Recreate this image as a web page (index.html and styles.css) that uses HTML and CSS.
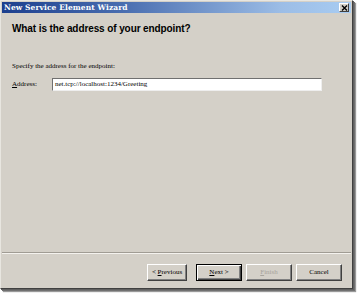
FILE: index.html
```html
<!DOCTYPE html>
<html>
<head>
<meta charset="utf-8">
<link rel="stylesheet" href="styles.css">
</head>
<body>
<div class="window">
  <div class="titlebar">
    <span class="title">New Service Element Wizard</span>
    <span class="close">
      <svg width="7" height="6" viewBox="0 0 7 6"><path d="M1 0.5 L6 5.5 M6 0.5 L1 5.5" stroke="#000" stroke-width="1.4"/></svg>
    </span>
  </div>
  <div class="header">
    <h1 class="heading">What is the address of your endpoint?</h1>
  </div>
  <div class="content">
    <p class="prompt">Specify the address for the endpoint:</p>
    <div class="field">
      <label class="label"><u>A</u>ddress:</label>
      <div class="input">net.tcp://localhost:1234/Greeting</div>
    </div>
  </div>
  <div class="separator"></div>
  <div class="buttons">
    <div class="btn">&lt; <u>P</u>revious</div>
    <div class="btn default"><u>N</u>ext &gt;</div>
    <div class="btn disabled"><u>F</u>inish</div>
    <div class="btn">Cancel</div>
  </div>
</div>
</body>
</html>
```
FILE: styles.css
```css
html, body {
  margin: 0;
  padding: 0;
  background: #ffffff;
}
body {
  width: 357px;
  height: 293px;
  overflow: hidden;
}
.window {
  box-sizing: border-box;
  width: 353px;
  height: 289px;
  background: #d4d0c8;
  border-top: 1px solid #e8e6e0;
  border-left: 1px solid #e8e6e0;
  border-right: 1px solid #404040;
  border-bottom: 1px solid #404040;
  box-shadow: 1px 1px 0 #606060, 2px 2px 0 #707070, 3px 3px 1px #999999;
  display: flex;
  flex-direction: column;
  font-family: "Liberation Serif", "DejaVu Serif", serif;
  color: #000;
}
.titlebar {
  height: 11px;
  margin: 1px 1px 0 1px;
  background: linear-gradient(to right, #1c3f8e 0%, #4a6eb0 35%, #9cbde6 80%, #a8ccf2 100%);
  display: flex;
  align-items: center;
  justify-content: space-between;
  padding: 0 2px 0 2px;
}
.title {
  color: #fff;
  font-family: "DejaVu Serif", "Liberation Serif", serif;
  font-weight: bold;
  font-size: 7.5px;
  letter-spacing: 0.1px;
  line-height: 11px;
}
.close {
  width: 10px;
  height: 9px;
  box-sizing: border-box;
  background: #d4d0c8;
  border-top: 1px solid #fff;
  border-left: 1px solid #fff;
  border-right: 1px solid #404040;
  border-bottom: 1px solid #404040;
  display: flex;
  align-items: center;
  justify-content: center;
}
.close svg { display: block; }
.header {
  padding: 10px 0 0 11px;
}
.heading {
  margin: 0;
  font-family: "Liberation Sans", Arial, sans-serif;
  font-weight: bold;
  font-size: 10px;
  letter-spacing: -0.1px;
  line-height: 12px;
}
.content {
  padding: 27px 0 0 11px;
  flex: 1;
}
.prompt {
  margin: 0;
  font-size: 7px;
  line-height: 9px;
}
.field {
  display: flex;
  align-items: center;
  margin-top: 7px;
}
.label {
  width: 40px;
  font-size: 7px;
  line-height: 9px;
}
.input {
  box-sizing: border-box;
  width: 270px;
  height: 13px;
  background: #fff;
  border-top: 1px solid #707070;
  border-left: 1px solid #707070;
  border-right: 1px solid #eeeeee;
  border-bottom: 1px solid #eeeeee;
  font-size: 7px;
  line-height: 11px;
  padding-left: 2px;
}
.separator {
  height: 0;
  border-top: 1px solid #a09c94;
  border-bottom: 1px solid #f4f2ee;
  margin: 0 1px;
}
.buttons {
  display: flex;
  justify-content: flex-end;
  gap: 4px;
  padding: 10px 10px 7px 0;
}
.btn {
  box-sizing: border-box;
  width: 46px;
  height: 17px;
  border-top: 1px solid #fff;
  border-left: 1px solid #fff;
  border-right: 1px solid #404040;
  border-bottom: 1px solid #404040;
  box-shadow: inset -1px -1px 0 #808080;
  font-size: 7px;
  line-height: 15px;
  text-align: center;
}
.btn:first-child { width: 40px; margin-right: 5px; }
.btn.default {
  border: 1px solid #000;
  box-shadow: inset 1px 1px 0 #fff, inset -1px -1px 0 #404040, inset -2px -2px 0 #808080;
}
.btn.disabled {
  color: #a8a49c;
}
```
